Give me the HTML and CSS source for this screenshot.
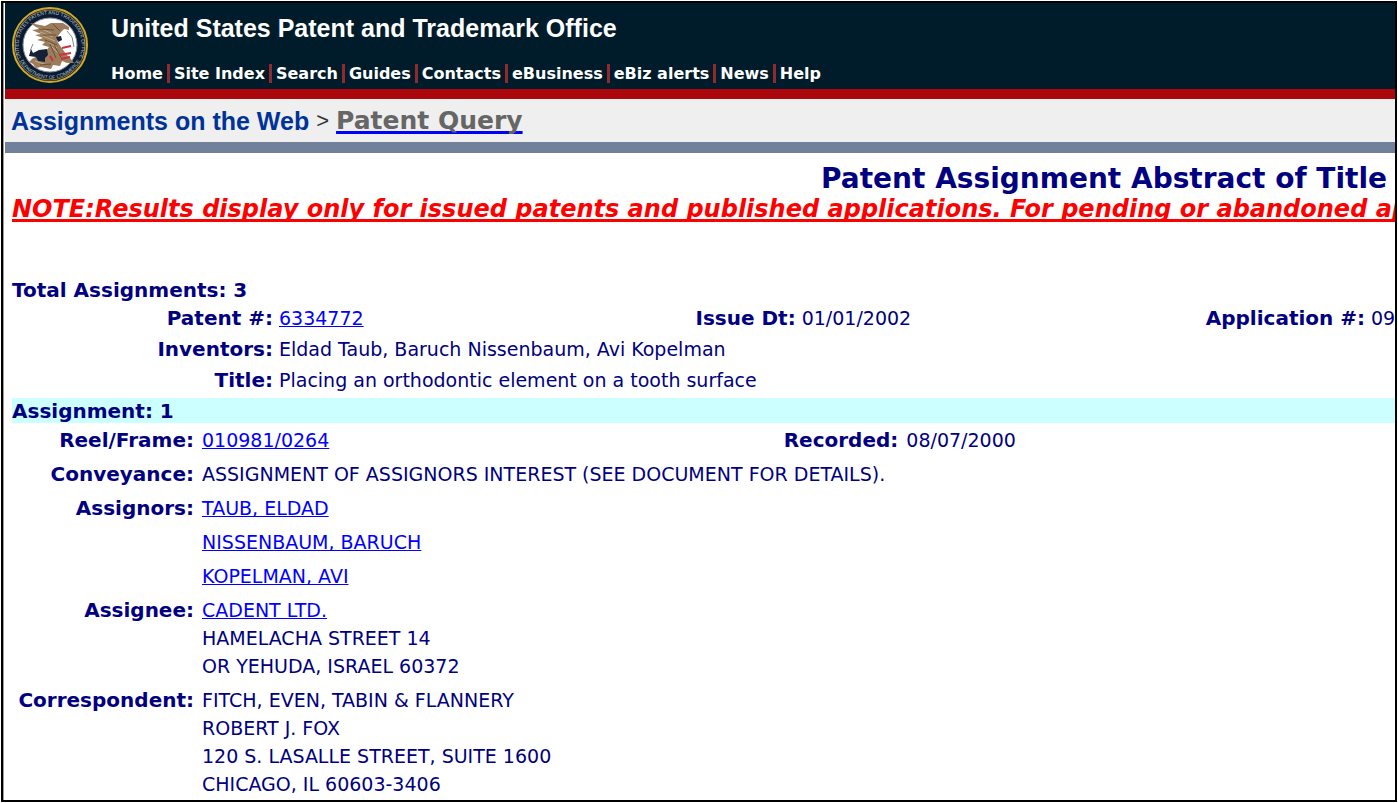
FILE: index.html
```html
<!DOCTYPE html>
<html lang="en">
<head>
    <meta charset="UTF-8">
    <meta name="viewport" content="width=device-width, initial-scale=1.0">
    <title>USPTO Assignments on the Web</title>
    <link rel="stylesheet" href="styles.css">
</head>
<body>
    <div class="page">
        <header class="site-header">
            <svg class="seal" viewBox="0 0 78 78" aria-hidden="true">
                <defs>
                    <path id="ring-top" d="M10 52 A31.500 31.500 0 1 1 68 52"/>
                    <path id="ring-bottom" d="M9 55 A34 34 0 0 0 69 55"/>
                </defs>
                <circle cx="39" cy="39" r="37" fill="#0a1c33" stroke="#d3a72c" stroke-width="2"/>
                <circle cx="39" cy="39" r="35" fill="none" stroke="#8f7a35" stroke-width="1"/>
                <text class="seal-text"><textPath href="#ring-top">UNITED STATES PATENT AND TRADEMARK OFFICE</textPath></text>
                <text class="seal-text"><textPath href="#ring-bottom">DEPARTMENT OF COMMERCE</textPath></text>
                <circle cx="39" cy="39" r="27" fill="#fff" stroke="#8d9099" stroke-width="1"/>
                <!-- eagle -->
                <path fill="#9b7d5c" d="M19 17 L34 20 L40 17 L52 17 L58 21 L58 24 L53 23 L50 26 L47 30 L46 35 L50 41 L55 48 L60 53 L63 57 L56 57 L51 55 L49 60 L42 59 L40 63 L30 61 L25 62 L22 58 L18 56 L21 53 L35 45 L38 41 L31 39 L34 36 L26 34 L32 32 L24 29 L30 28 L21 24 L28 23 Z"/>
                <path fill="none" stroke="#c2aa87" stroke-width="1" d="M26 21 L40 27 M29 26 L42 31 M32 30 L44 35 M36 35 L46 42 M40 40 L50 50 M24 55 L36 59"/>
                <path fill="none" stroke="#68503c" stroke-width="1" d="M28 23 L43 24 M32 29 L45 29 M34 34 L46 39 M39 38 L45 52 M43 39 L51 53 M29 59 L40 58 M42 18 L49 25"/>
                <path fill="#142238" d="M45 31 L50 30 L51 34 L47 36 Z M20 43 L22 47 L28 44 L36 43 L37 49 L34 52 L34 56 L27 55 L25 51 L18 50 Z"/>
                <path fill="none" stroke="#cf2f3b" stroke-width="2" d="M51 42 L60 40 M48 49 L60 47 M50 53 L59 51 M39 50 L42 55"/>
                <path fill="none" stroke="#8a8a8a" stroke-width="1" d="M56 25 L61 31 L63 41 M22 38 L19 45"/>
            </svg>
            <div class="header-text">
                <div class="site-name">United States Patent and Trademark Office</div>
                <nav class="site-nav">
                    <a href="#">Home</a>
                    <a href="#">Site Index</a>
                    <a href="#">Search</a>
                    <a href="#">Guides</a>
                    <a href="#">Contacts</a>
                    <a href="#">eBusiness</a>
                    <a href="#">eBiz alerts</a>
                    <a href="#">News</a>
                    <a href="#">Help</a>
                </nav>
            </div>
        </header>

        <div class="breadcrumb">
            <span class="crumb-home">Assignments on the Web</span>
            <span class="crumb-sep">&gt;</span>
            <a class="crumb-current" href="#">Patent Query</a>
        </div>

        <main class="content">
            <h1>Patent Assignment Abstract of Title</h1>
            <p class="note">NOTE:Results display only for issued patents and published applications. For pending or abandoned ap</p>

            <h2 class="total">Total Assignments: 3</h2>
            <dl class="patent">
                <dt>Patent #:</dt>
                <dd><a href="#">6334772</a></dd>
                <dt>Issue Dt:</dt>
                <dd>01/01/2002</dd>
                <dt>Application #:</dt>
                <dd>09</dd>
                <dt class="first">Inventors:</dt>
                <dd class="wide">Eldad Taub, Baruch Nissenbaum, Avi Kopelman</dd>
                <dt class="first">Title:</dt>
                <dd class="wide">Placing an orthodontic element on a tooth surface</dd>
            </dl>

            <h2 class="band">Assignment: 1</h2>
            <dl class="assignment">
                <dt>Reel/Frame:</dt>
                <dd><a href="#">010981/0264</a></dd>
                <dt>Recorded:</dt>
                <dd>08/07/2000</dd>
                <dt class="first">Conveyance:</dt>
                <dd class="wide">ASSIGNMENT OF ASSIGNORS INTEREST (SEE DOCUMENT FOR DETAILS).</dd>
                <dt class="first">Assignors:</dt>
                <dd class="wide"><a href="#">TAUB, ELDAD</a></dd>
                <dd class="wide"><a href="#">NISSENBAUM, BARUCH</a></dd>
                <dd class="wide"><a href="#">KOPELMAN, AVI</a></dd>
                <dt class="first">Assignee:</dt>
                <dd class="wide"><a href="#">CADENT LTD.</a><br>HAMELACHA STREET 14<br>OR YEHUDA, ISRAEL 60372</dd>
                <dt class="first">Correspondent:</dt>
                <dd class="wide">FITCH, EVEN, TABIN &amp; FLANNERY<br>ROBERT J. FOX<br>120 S. LASALLE STREET, SUITE 1600<br>CHICAGO, IL 60603-3406</dd>
            </dl>
            <div class="band"></div>
        </main>
    </div>
</body>
</html>
```
FILE: styles.css
```css
* {
    box-sizing: border-box;
}

body {
    margin: 0;
    padding: 1px;
    height: 100vh;
    overflow: hidden;
    background: #fff;
    color: #000080;
    font-family: "DejaVu Sans", Verdana, sans-serif;
    font-size: 19px;
}

.page {
    height: calc(100vh - 2px);
    border: 2px solid #000;
    overflow: hidden;
    box-shadow: inset 1px 0 #9b9b93;
    padding-left: 2px;
}

/* header */
.site-header {
    display: flex;
    gap: 22px;
    height: 96px;
    padding: 3px 6px 0;
    background: #001c2b;
    border-bottom: 10px solid #ab070d;
}

.seal {
    width: 78px;
    height: 78px;
}

.seal-text {
    fill: #b9c0c8;
    font-family: "Liberation Sans", Arial, sans-serif;
    font-size: 5px;
}

.site-name {
    color: #fff;
    font: bold 25px/28px "Liberation Sans", Arial, sans-serif;
    padding-top: 8px;
    white-space: nowrap;
}

.site-nav {
    display: flex;
    margin-top: 22px;
    white-space: nowrap;
}

.site-nav a {
    color: #fff;
    font-size: 16px;
    font-weight: bold;
    line-height: 19px;
    text-decoration: none;
}

.site-nav a + a {
    margin-left: 4px;
    padding-left: 4px;
    border-left: 3px solid #8f2b2e;
}

.breadcrumb {
    display: flex;
    align-items: center;
    gap: 7px;
    height: 54px;
    padding: 0 6px;
    background: #efefef;
    border-bottom: 11px solid #71809b;
    white-space: nowrap;
}

.crumb-home {
    color: #003399;
    font: bold 25px/32px "Liberation Sans", Arial, sans-serif;
}

.crumb-sep {
    color: #333;
    font: 22px/32px "Liberation Sans", Arial, sans-serif;
}

.crumb-current {
    color: #666;
    font-size: 25px;
    font-weight: bold;
    line-height: 32px;
    text-decoration: underline 3px #00f;
    text-decoration-skip-ink: none;
}

/* abstract of title */
.content {
    padding: 10px 0 0 7px;
}

h1 {
    margin: 0;
    padding-right: 8px;
    font-size: 28px;
    line-height: 32px;
    text-align: right;
}

.note {
    margin: 0 0 54px;
    color: #f00;
    font-size: 24px;
    font-style: italic;
    font-weight: bold;
    line-height: 28px;
    text-decoration: underline 3px;
    text-decoration-skip-ink: none;
    white-space: nowrap;
    overflow: hidden;
}

h2,
dt {
    font-size: 20px;
    font-weight: bold;
}

h2 {
    margin: 0;
    line-height: 26px;
}

a {
    color: #00f;
    text-decoration-skip-ink: none;
}

dl {
    display: grid;
    margin: 0;
    white-space: nowrap;
}

dt {
    text-align: right;
}

dd {
    margin: 0;
}

.first {
    grid-column: 1;
}

.wide {
    grid-column: 2 / -1;
}

.patent {
    grid-template-columns: 261px 33fr auto 32fr auto 24px;
    column-gap: 6px;
    line-height: 31px;
    padding-bottom: 2px;
}

.band {
    height: 25px;
    background: #ccffff;
}

.assignment {
    grid-template-columns: 182px 54fr auto 46fr;
    column-gap: 8px;
    line-height: 28px;
}

.assignment dt,
.assignment dd {
    padding: 3px 0;
}
```
